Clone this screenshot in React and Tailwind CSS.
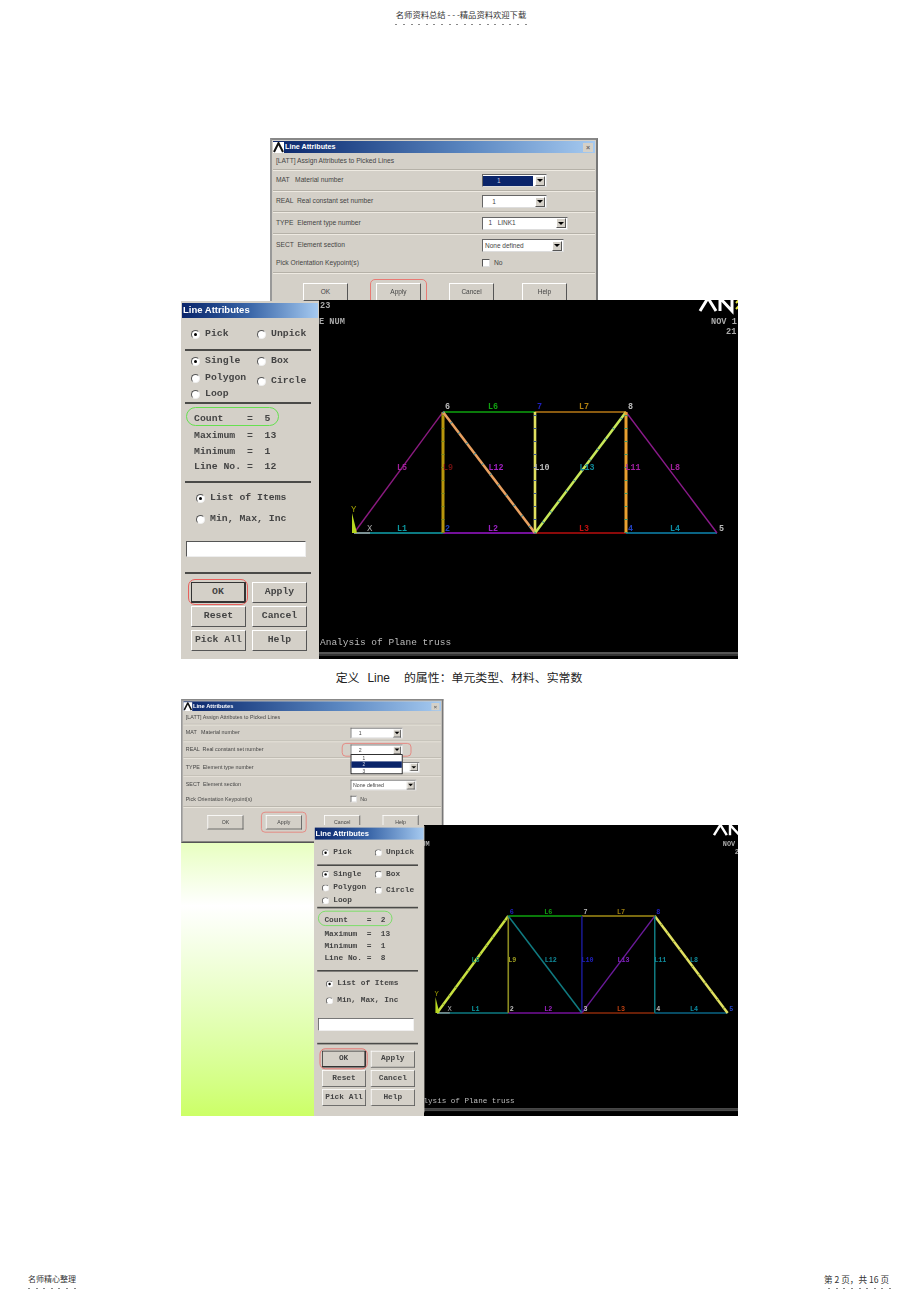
import React from "react";

const MONO = "font-['Liberation_Mono',monospace]";

const Dashes = ({ count }) => (
  <div className="flex h-[1px] gap-[5.6px]">
    {Array.from({ length: count }).map((_, i) => (
      <span key={i} className="h-[1px] w-[2px] bg-[#888]" />
    ))}
  </div>
);

const AnsysMark = () => (
  <span className="flex h-[11px] w-[11px] shrink-0 items-center justify-center bg-white">
    <svg viewBox="0 0 11 11" className="h-[11px] w-[11px]">
      <path d="M1 10 L5.5 1 L10 10" fill="none" stroke="#111" strokeWidth="2" />
    </svg>
  </span>
);

const Select = ({ value, width, active, children }) => (
  <div
    className={`relative flex h-[13px] items-center justify-between border border-t-[#666] border-l-[#666] border-r-[#ddd] border-b-[#ddd] bg-white pr-[1px] ${width}`}
  >
    <span
      className={`flex h-[10px] items-center whitespace-pre text-[6.5px] ${active ? "grow bg-[#0a246a] pl-[14px] text-[#ccd] mr-[2px]" : "pl-[2px] text-[#444]"}`}
    >
      {value}
    </span>
    <span className="flex h-[10px] w-[10px] shrink-0 items-center justify-center border border-t-white border-l-white border-r-[#555] border-b-[#555] bg-[#d4d0c8]">
      <span className="h-0 w-0 border-x-[3px] border-t-[3px] border-x-transparent border-t-black" />
    </span>
    {children}
  </div>
);

const DialogButton = ({ label, ring }) => (
  <div className="relative flex h-[18px] w-[45px] shrink-0 items-center justify-center border border-t-white border-l-white border-r-[#555] border-b-[#555] bg-[#d4d0c8] text-[6.5px] text-[#444]">
    {label}
    {ring && <span className="absolute inset-x-[-7px] inset-y-[-5px] rounded-[5px] border-[1.5px] border-[#e87a74]" />}
  </div>
);

const Divider = () => <div className="mx-[1px] h-[2px] border-t border-b border-t-[#b5b1a8] border-b-[#eeeae2]" />;

const FormRow = ({ label, height, children }) => (
  <div className={`grid grid-cols-[206px_1fr] items-center pl-[4px] text-[6.7px] text-[#444] ${height}`}>
    <span className="whitespace-pre">{label}</span>
    <div>{children}</div>
  </div>
);

// the picker dialog; second figure shows the same window with the list dropped open
const AttributesDialog = ({ materialActive, real, open }) => (
  <div className="h-[180px] w-[328px] border-2 border-t-[#888] border-l-[#999] border-r-[#777] border-b-[#555] bg-[#d4d0c8] font-['Liberation_Sans',sans-serif]">
    <div className="mx-[1px] mt-[1px] flex h-[12px] items-center bg-gradient-to-r from-[#0a246a] via-[#5a86c0] via-60% to-[#a6caf0] pr-[2px] text-[7.2px] font-bold text-white">
      <AnsysMark />
      <span className="ml-[1px]">Line Attributes</span>
      <span className="ml-auto flex h-[9px] w-[10px] items-center justify-center bg-[#d4d0c8] text-[7px] leading-none text-[#666]">×</span>
    </div>
    <div className="flex h-[16px] items-center pl-[4px] text-[6.7px] text-[#444]">[LATT]  Assign Attributes to Picked Lines</div>
    <Divider />
    <FormRow label="MAT   Material number" height="h-[19px]">
      <Select value={materialActive ? "1" : "    1"} width="w-[65px]" active={materialActive} />
    </FormRow>
    <Divider />
    <FormRow label="REAL  Real constant set number" height="h-[19px]">
      <Select value={`    ${real}`} width="w-[65px]">
        {open && (
          <div className="absolute left-[-1px] top-full z-10 flex h-[25px] w-[65px] flex-col border border-black bg-white text-[6px] leading-[8px] text-[#444]">
            <span className="pl-[14px]">1</span>
            <span className="bg-[#0a246a] pl-[14px] text-[#ccd]">2</span>
            <span className="pl-[14px]">3</span>
          </div>
        )}
        {open && <span className="absolute inset-x-[-12px] inset-y-[-3px] rounded-[5px] border-[1.5px] border-[#e87a74]" />}
      </Select>
    </FormRow>
    <Divider />
    <FormRow label="TYPE  Element type number" height="h-[20px]">
      <Select value={open ? "" : "  1   LINK1"} width="w-[86px]" />
    </FormRow>
    <Divider />
    <FormRow label="SECT  Element section" height="h-[21px]">
      <Select value="None defined" width="w-[82px]" />
    </FormRow>
    <FormRow label="Pick Orientation Keypoint(s)" height="h-[14px]">
      <div className="flex items-center gap-[4px]">
        <span className="h-[8px] w-[8px] border border-t-[#555] border-l-[#555] border-r-[#ddd] border-b-[#ddd] bg-white" />
        <span>No</span>
      </div>
    </FormRow>
    <div className="mt-[2px]">
      <Divider />
    </div>
    <div className="mt-[9px] flex gap-[28px] pl-[31px]">
      <DialogButton label="OK" />
      <DialogButton label="Apply" ring />
      <DialogButton label="Cancel" />
      <DialogButton label="Help" />
    </div>
  </div>
);

const Radio = ({ on }) => (
  <span className="flex h-[9px] w-[9px] shrink-0 items-center justify-center rounded-full border border-t-[#555] border-l-[#555] border-r-[#eee] border-b-[#eee] bg-white">
    {on && <span className="h-[3px] w-[3px] rounded-full bg-black" />}
  </span>
);

const RadioLabel = ({ on, label, width }) => (
  <div className={`flex items-center gap-[5px] ${width}`}>
    <Radio on={on} />
    <span className="whitespace-pre">{label}</span>
  </div>
);

const PanelRule = () => <div className="ml-[4px] h-[2px] w-[126px] bg-[#4a4a48]" />;

const PanelButton = ({ label, primary, ring }) => (
  <div
    className={`relative flex h-[21px] w-[55px] items-center justify-center border bg-[#d4d0c8] ${primary ? "border-[#333] border-r-2 border-b-2" : "border-t-white border-l-white border-r-[#555] border-b-[#555]"}`}
  >
    {label}
    {ring && <span className="absolute inset-x-[-4px] inset-y-[-4px] rounded-[7px] border-[1.5px] border-[#e8605c]" />}
  </div>
);

const stat = "h-[14px] whitespace-pre pl-[13px] leading-[14px]";

const PickPanel = ({ count, lineNo }) => (
  <div className={`h-[358px] w-[138px] overflow-hidden bg-[#d4d0c8] pt-[2px] text-[9.8px] font-bold text-[#444] ${MONO}`}>
    <div className="mx-[1px] flex h-[15px] items-center bg-gradient-to-r from-[#0a246a] via-[#3a66a8] to-[#a6caf0] pl-[1px] font-['Liberation_Sans',sans-serif] text-[9.5px] text-white">
      Line Attributes
    </div>
    <div className="ml-[10px] mt-[9px] flex h-[14px]">
      <RadioLabel on label="Pick" width="w-[66px]" />
      <RadioLabel label="Unpick" />
    </div>
    <div className="mt-[8px]">
      <PanelRule />
    </div>
    <div className="ml-[10px] mt-[3px] flex h-[14px]">
      <RadioLabel on label="Single" width="w-[66px]" />
      <RadioLabel label="Box" />
    </div>
    <div className="ml-[10px] mt-[3px] flex h-[14px] items-start">
      <RadioLabel label="Polygon" width="w-[66px] h-[14px]" />
      <div className="mt-[3px] h-[14px]">
        <RadioLabel label="Circle" width="h-[14px]" />
      </div>
    </div>
    <div className="ml-[10px] mt-[2px] flex h-[14px]">
      <RadioLabel label="Loop" />
    </div>
    <div className="mt-[1px]">
      <PanelRule />
    </div>
    <div className={`relative mt-[8px] ${stat}`}>
      {`Count    =  ${count}`}
      <span className="absolute left-[5px] top-[-5px] h-[19px] w-[93px] rounded-full border-[1.5px] border-[#66e050]" />
    </div>
    <div className={`mt-[3px] ${stat}`}>Maximum  =  13</div>
    <div className={`mt-[2px] ${stat}`}>Minimum  =  1</div>
    <div className={`mt-[1px] ${stat}`}>{`Line No. =  ${lineNo}`}</div>
    <div className="mt-[7px]">
      <PanelRule />
    </div>
    <div className="ml-[15px] mt-[8px] flex h-[14px]">
      <RadioLabel on label="List of Items" />
    </div>
    <div className="ml-[15px] mt-[7px] flex h-[14px]">
      <RadioLabel label="Min, Max, Inc" />
    </div>
    <div className="ml-[5px] mt-[15px] h-[16px] w-[120px] border border-t-[#555] border-l-[#555] border-r-[#eee] border-b-[#eee] bg-white" />
    <div className="mt-[15px]">
      <PanelRule />
    </div>
    <div className="ml-[10px] mt-[8px] grid w-[116px] grid-cols-2 gap-x-[6px] gap-y-[3px]">
      <PanelButton label="OK" primary ring />
      <PanelButton label="Apply" />
      <PanelButton label="Reset" />
      <PanelButton label="Cancel" />
      <PanelButton label="Pick All" />
      <PanelButton label="Help" />
    </div>
  </div>
);

const NODES = {
  1: [35, 233],
  2: [124, 233],
  3: [216, 233],
  4: [307, 233],
  5: [398, 233],
  6: [124, 112],
  7: [216, 112],
  8: [307, 112],
};

const MEMBERS_FIRST = [
  { from: 1, to: 2, color: "#0c7a82", width: 1.8 },
  { from: 2, to: 3, color: "#74109a", width: 1.8 },
  { from: 3, to: 4, color: "#8b0a0a", width: 1.8 },
  { from: 4, to: 5, color: "#0a6484", width: 1.8 },
  { from: 1, to: 6, color: "#8b1a80", width: 1.4 },
  { from: 6, to: 7, color: "#0a7a0a", width: 2 },
  { from: 7, to: 8, color: "#8a5a10", width: 2 },
  { from: 8, to: 5, color: "#8a1a8a", width: 1.4 },
  { from: 2, to: 6, color: "#b8960c", width: 3, dots: "#7a8a20" },
  { from: 3, to: 7, color: "#e0e060", width: 2.6, dots: "#3a5a9a" },
  { from: 6, to: 3, color: "#e8a060", width: 2.6, dots: "#3a8a9a" },
  { from: 3, to: 8, color: "#c8e858", width: 2.6, dots: "#3a8a9a" },
  { from: 4, to: 8, color: "#e8a030", width: 3, dots: "#3a9a70" },
];

const MEMBERS_SECOND = [
  { from: 1, to: 2, color: "#0c7a82", width: 1.9 },
  { from: 2, to: 3, color: "#74109a", width: 1.9 },
  { from: 3, to: 4, color: "#8b2a0a", width: 1.9 },
  { from: 4, to: 5, color: "#0a6484", width: 1.9 },
  { from: 1, to: 6, color: "#c8e040", width: 3.2, dots: "#7a9a30" },
  { from: 6, to: 7, color: "#0a7a0a", width: 2.4 },
  { from: 7, to: 8, color: "#7a6a10", width: 2.4 },
  { from: 8, to: 5, color: "#e0e060", width: 3.2, dots: "#8a9a30" },
  { from: 2, to: 6, color: "#8a8a20", width: 2 },
  { from: 3, to: 7, color: "#1a1a9a", width: 1.8 },
  { from: 6, to: 3, color: "#107a80", width: 1.9 },
  { from: 3, to: 8, color: "#6a1a9a", width: 1.8 },
  { from: 4, to: 8, color: "#107a80", width: 1.9 },
];

const LABELS_FIRST = [
  ["L1", 83, 231, "#0c9aa2"], ["L2", 174, 231, "#9a20c0"], ["L3", 265, 231, "#c01010"], ["L4", 356, 231, "#0c8aa2"],
  ["L6", 174, 109, "#10a010"], ["L7", 265, 109, "#b08010"],
  ["L5", 83, 170, "#a0209a"], ["L9", 129, 170, "#701010"], ["L12", 177, 170, "#a020c0"], ["L10", 223, 170, "#bbbbbb"],
  ["L13", 268, 170, "#108a9a"], ["L11", 314, 170, "#a020a0"], ["L8", 356, 170, "#a0209a"],
  ["6", 126, 109, "#bbbbbb"], ["7", 218, 109, "#2020c0"], ["8", 309, 109, "#bbbbbb"], ["5", 400, 231, "#bbbbbb"],
  ["2", 126, 231, "#2040c0"], ["4", 309, 231, "#2040c0"],
];

const LABELS_SECOND = [
  ["L1", 83, 231, "#0c9aa2"], ["L2", 174, 231, "#9a20c0"], ["L3", 265, 231, "#c04010"], ["L4", 356, 231, "#0c8aa2"],
  ["L6", 174, 109, "#10a010"], ["L7", 265, 109, "#a08010"],
  ["L5", 83, 170, "#108a70"], ["L9", 129, 170, "#a0a020"], ["L12", 177, 170, "#108a9a"], ["L10", 223, 170, "#2020c0"],
  ["L13", 268, 170, "#8020c0"], ["L11", 314, 170, "#108a9a"], ["L8", 356, 170, "#108a9a"],
  ["6", 126, 109, "#2020c0"], ["7", 218, 109, "#bbbbbb"], ["8", 309, 109, "#2020c0"], ["5", 400, 231, "#2040c0"],
  ["2", 126, 231, "#bbbbbb"], ["3", 218, 231, "#bbbbbb"], ["4", 309, 231, "#bbbbbb"],
];

const Plot = ({ members, labels, width, height, viewBox }) => (
  <svg width={width} height={height} viewBox={viewBox} className={`block bg-black ${MONO}`}>
    {/* logo, cut off by the top of the graphics window */}
    <path d="M381 11 L389 -2 L397 11" fill="none" stroke="#fff" strokeWidth="3" />
    <path d="M401 11 L401 -2 L413 11 L413 -2" fill="none" stroke="#fff" strokeWidth="3" />
    <path d="M417 3 L420 0 M417 9 L420 6" stroke="#e8e840" strokeWidth="2" />

    <g fontSize="8.6" fill="#aaa" fontWeight="bold">
      <text x="1" y="8">23</text>
      <text x="0" y="24">E NUM</text>
      <text x="392" y="24">NOV 1</text>
      <text x="407" y="34">21</text>
    </g>

    {members.map((m) => {
      const [x1, y1] = NODES[m.from];
      const [x2, y2] = NODES[m.to];
      return (
        <g key={`${m.from}-${m.to}`}>
          <line x1={x1} y1={y1} x2={x2} y2={y2} stroke={m.color} strokeWidth={m.width} />
          {m.dots && <line x1={x1} y1={y1} x2={x2} y2={y2} stroke={m.dots} strokeWidth={m.width} strokeDasharray="1 12" />}
        </g>
      );
    })}

    <line x1="35" y1="233" x2="51" y2="233" stroke="#999" strokeWidth="1.6" />
    <path d="M33 233 L33 213 L38 233 Z" fill="#b8d820" />
    <text x="32" y="212" fontSize="9" fill="#a0a000">Y</text>
    <text x="48" y="231" fontSize="9" fill="#aaa">X</text>

    <g fontSize="8.4" fontWeight="bold">
      {labels.map(([text, x, y, color]) => (
        <text key={text} x={x} y={y} fill={color} textAnchor={text.length > 1 ? "middle" : "start"}>
          {text}
        </text>
      ))}
    </g>

    <text x="1" y="345" fontSize="9.5" fill="#bbb">Analysis of Plane truss</text>
    <line x1="0" y1="353" x2="419" y2="353" stroke="#aaa" strokeWidth="1" />
    <line x1="0" y1="355" x2="419" y2="355" stroke="#666" strokeWidth="1" />
  </svg>
);

const App = () => (
  <div className="flex h-[1301px] w-[920px] flex-col overflow-hidden bg-white font-['Noto_Sans_CJK_SC',sans-serif]">
    <header className="flex flex-col items-center pt-[8px] pl-[2px]">
      <p className="h-[13px] text-[8.3px] leading-[13px] text-[#333]">名师资料总结 - - -精品资料欢迎下载</p>
      <div className="mt-[3px]">
        <Dashes count={18} />
      </div>
    </header>

    {/* first figure: the windows overlap like on a desktop */}
    <section className="relative ml-[181px] mt-[113px] h-[521px] w-[557px] blur-[0.6px]">
      <div className="absolute left-[89px] top-0">
        <AttributesDialog materialActive real="1" />
      </div>
      <div className="absolute left-[138px] top-[162px]">
        <Plot members={MEMBERS_FIRST} labels={LABELS_FIRST} width={419} height={359} viewBox="0 0 419 359" />
      </div>
      <div className="absolute left-0 top-[163px]">
        <PickPanel count="5" lineNo="12" />
      </div>
    </section>

    <p className="mt-[9px] flex h-[17px] items-baseline justify-center pr-[2px] text-[11.9px] leading-[17px] text-[#222]">
      <span>定义</span>
      <span className="ml-[8px] font-['Liberation_Sans',sans-serif]">Line</span>
      <span className="ml-[14px]">的属性：单元类型、材料、实常数</span>
    </p>

    <section className="relative ml-[181px] mt-[14px] h-[417px] w-[557px] blur-[0.7px]">
      <div className="absolute left-0 top-[144px] h-[273px] w-[133px] bg-gradient-to-b from-[#e8ffc0] via-white via-[23%] to-[#ccff66]" />
      <div className="absolute left-0 top-0 h-[144px] w-[262px]">
        <div className="origin-top-left scale-[0.8]">
          <AttributesDialog real="2" open />
        </div>
      </div>
      <div className="absolute left-[228px] top-[126px]">
        <Plot members={MEMBERS_SECOND} labels={LABELS_SECOND} width={329} height={291} viewBox="0 -1.5 411 363" />
      </div>
      <div className="absolute left-[133px] top-[126px] h-[291px] w-[110px] bg-[#d4d0c8] pt-[1px]">
        <div className="origin-top-left scale-[0.8]">
          <PickPanel count="2" lineNo="8" />
        </div>
      </div>
    </section>

    <footer className="mt-auto flex items-start justify-between pb-[12px] pl-[28px] pr-[29px] text-[8px] leading-[12px] text-[#333]">
      <div>
        <p>名师精心整理</p>
        <div className="mt-[3px]">
          <Dashes count={7} />
        </div>
      </div>
      <div className="flex flex-col items-end">
        <p className="mr-[2px] text-[8.6px]">第 2 页，共 16 页</p>
        <div className="mt-[3px]">
          <Dashes count={9} />
        </div>
      </div>
    </footer>
  </div>
);

export default App;
